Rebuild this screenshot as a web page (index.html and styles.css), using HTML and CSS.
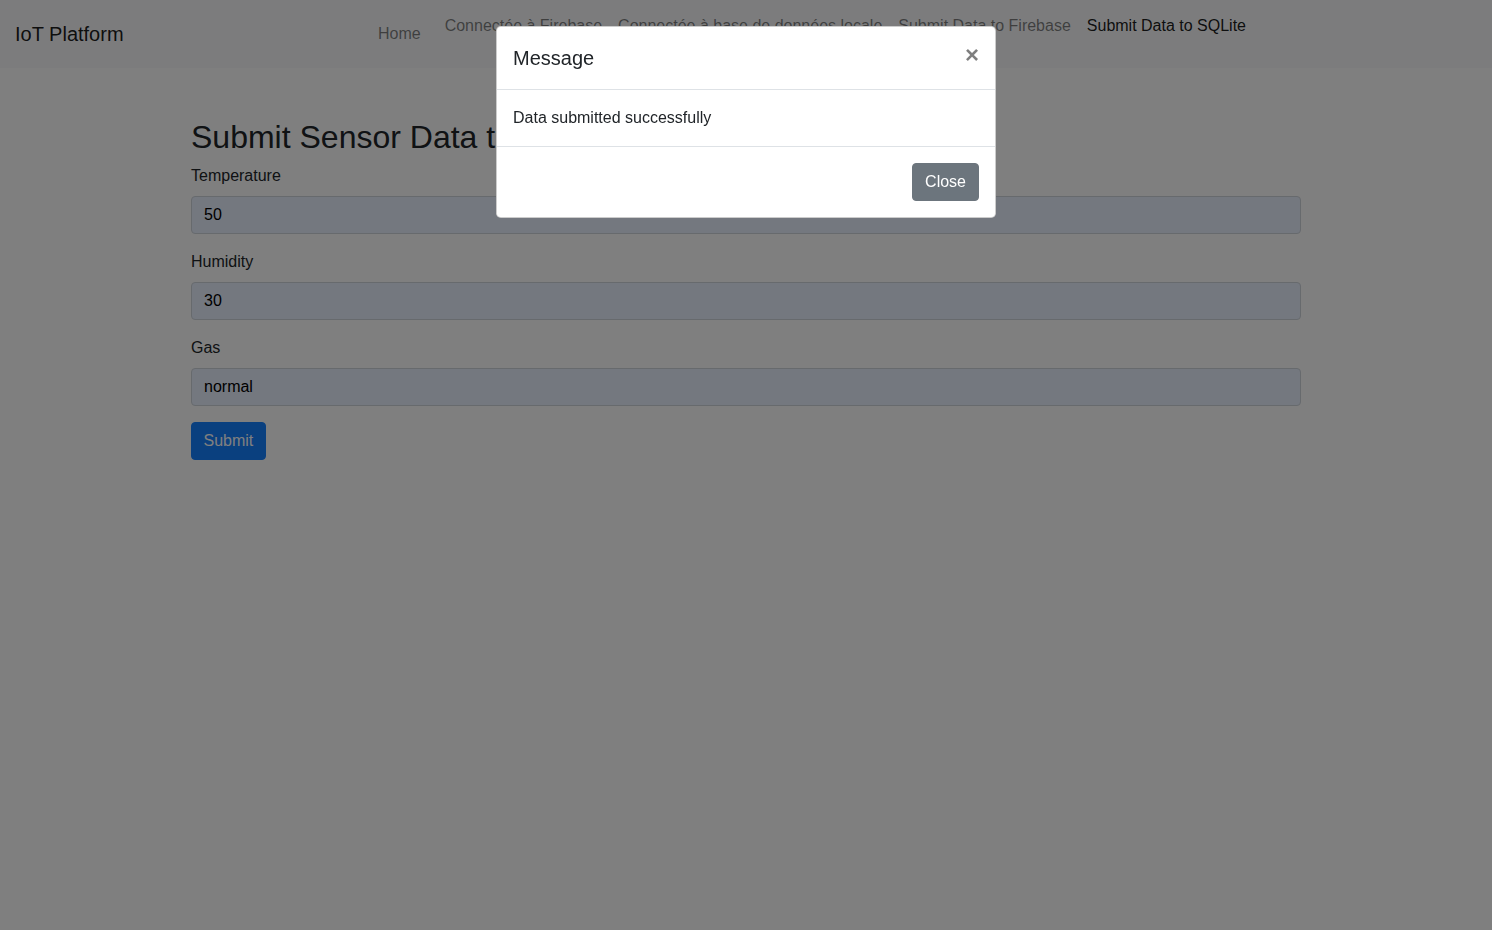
FILE: index.html
```html
<!DOCTYPE html>
<html lang="fr">
<head>
<meta charset="utf-8">
<title>IoT Platform</title>
<link rel="stylesheet" href="styles.css">
</head>
<body>
<nav class="navbar">
  <a class="brand" href="#">IoT Platform</a>
  <ul class="nav">
    <li class="nav-item home"><a class="nav-link" href="#">Home</a></li>
    <li class="nav-item top"><a class="nav-link" href="#">Connectée à Firebase</a></li>
    <li class="nav-item top"><a class="nav-link" href="#">Connectée à base de données locale</a></li>
    <li class="nav-item top"><a class="nav-link" href="#">Submit Data to Firebase</a></li>
    <li class="nav-item top"><a class="nav-link active" href="#">Submit Data to SQLite</a></li>
  </ul>
</nav>

<main class="container">
  <h2 class="title">Submit Sensor Data to SQLite</h2>
  <form class="form">
    <div class="form-group">
      <label class="label">Temperature</label>
      <input class="input" type="text" value="50">
    </div>
    <div class="form-group">
      <label class="label">Humidity</label>
      <input class="input" type="text" value="30">
    </div>
    <div class="form-group">
      <label class="label">Gas</label>
      <input class="input" type="text" value="normal">
    </div>
    <button type="button" class="btn btn-primary">Submit</button>
  </form>
</main>

<div class="backdrop"></div>
<div class="modal">
  <div class="modal-dialog">
    <div class="modal-content">
      <div class="modal-header">
        <h5 class="modal-title">Message</h5>
        <button type="button" class="close">×</button>
      </div>
      <div class="modal-body">Data submitted successfully</div>
      <div class="modal-footer">
        <button type="button" class="btn btn-secondary">Close</button>
      </div>
    </div>
  </div>
</div>
</body>
</html>
```

FILE: styles.css
```css
* { box-sizing: border-box; }

html, body {
  margin: 0;
  height: 100%;
}

body {
  font-family: "Liberation Sans", Arial, sans-serif;
  font-size: 16px;
  line-height: 1.5;
  color: #212529;
  background: #fff;
}

.navbar {
  display: flex;
  align-items: center;
  height: 68px;
  padding: 0 16px 0 15px;
  background: #f8f9fa;
}

.brand {
  font-size: 20px;
  line-height: 30px;
  color: rgba(0, 0, 0, 0.9);
  text-decoration: none;
}

.nav {
  display: flex;
  align-self: stretch;
  align-items: center;
  list-style: none;
  margin: 0 222px 0 auto;
  padding: 0;
}

.nav-item.home {
  margin-right: 8px;
}

.nav-item.top {
  align-self: flex-start;
  padding-top: 14px;
}

.nav-link {
  display: block;
  padding: 0 8px;
  line-height: 24px;
  color: rgba(0, 0, 0, 0.5);
  text-decoration: none;
}

.nav-link.active {
  color: rgba(0, 0, 0, 0.9);
}

.container {
  width: 1140px;
  margin: 0 auto;
  padding: 50px 15px 0;
}

.title {
  margin: 0 0 8px;
  font-size: 32px;
  font-weight: 500;
  line-height: 1.2;
}

.form-group {
  margin-bottom: 16px;
}

.label {
  display: block;
  margin-bottom: 8px;
}

.input {
  display: block;
  width: 100%;
  height: 38px;
  padding: 6px 12px;
  font-family: inherit;
  font-size: 16px;
  line-height: 1.5;
  color: #000;
  background: #e8f0fe;
  border: 1px solid #ced4da;
  border-radius: 4px;
}

.btn {
  display: inline-block;
  padding: 6px 12px;
  font-family: inherit;
  font-size: 16px;
  line-height: 1.5;
  border: 1px solid transparent;
  border-radius: 4px;
  cursor: pointer;
}

.btn-primary {
  padding: 6px 11.5px;
  color: #fff;
  background: #1580ff;
  border-color: #1580ff;
}

.btn-secondary {
  color: #fff;
  background: #6c757d;
  border-color: #6c757d;
}

.backdrop {
  position: fixed;
  inset: 0;
  background: #000;
  opacity: 0.5;
}

.modal {
  position: fixed;
  inset: 0;
}

.modal-dialog {
  width: 500px;
  margin: 26px auto;
}

.modal-content {
  display: flex;
  flex-direction: column;
  background: #fff;
  border: 1px solid rgba(0, 0, 0, 0.2);
  border-radius: 4.8px;
}

.modal-header {
  display: flex;
  align-items: flex-start;
  justify-content: space-between;
  padding: 16px;
  border-bottom: 1px solid #dee2e6;
}

.modal-title {
  margin: 0;
  font-size: 20px;
  font-weight: 500;
  line-height: 1.5;
}

.close {
  margin: -16px -16px -16px auto;
  padding: 16px;
  font-family: inherit;
  font-size: 24px;
  font-weight: 700;
  line-height: 1;
  color: #000;
  opacity: 0.5;
  background: transparent;
  border: 0;
}

.modal-body {
  padding: 16px;
}

.modal-footer {
  display: flex;
  justify-content: flex-end;
  padding: 12px;
  border-top: 1px solid #dee2e6;
}

.modal-footer .btn {
  margin: 4px;
}
```
